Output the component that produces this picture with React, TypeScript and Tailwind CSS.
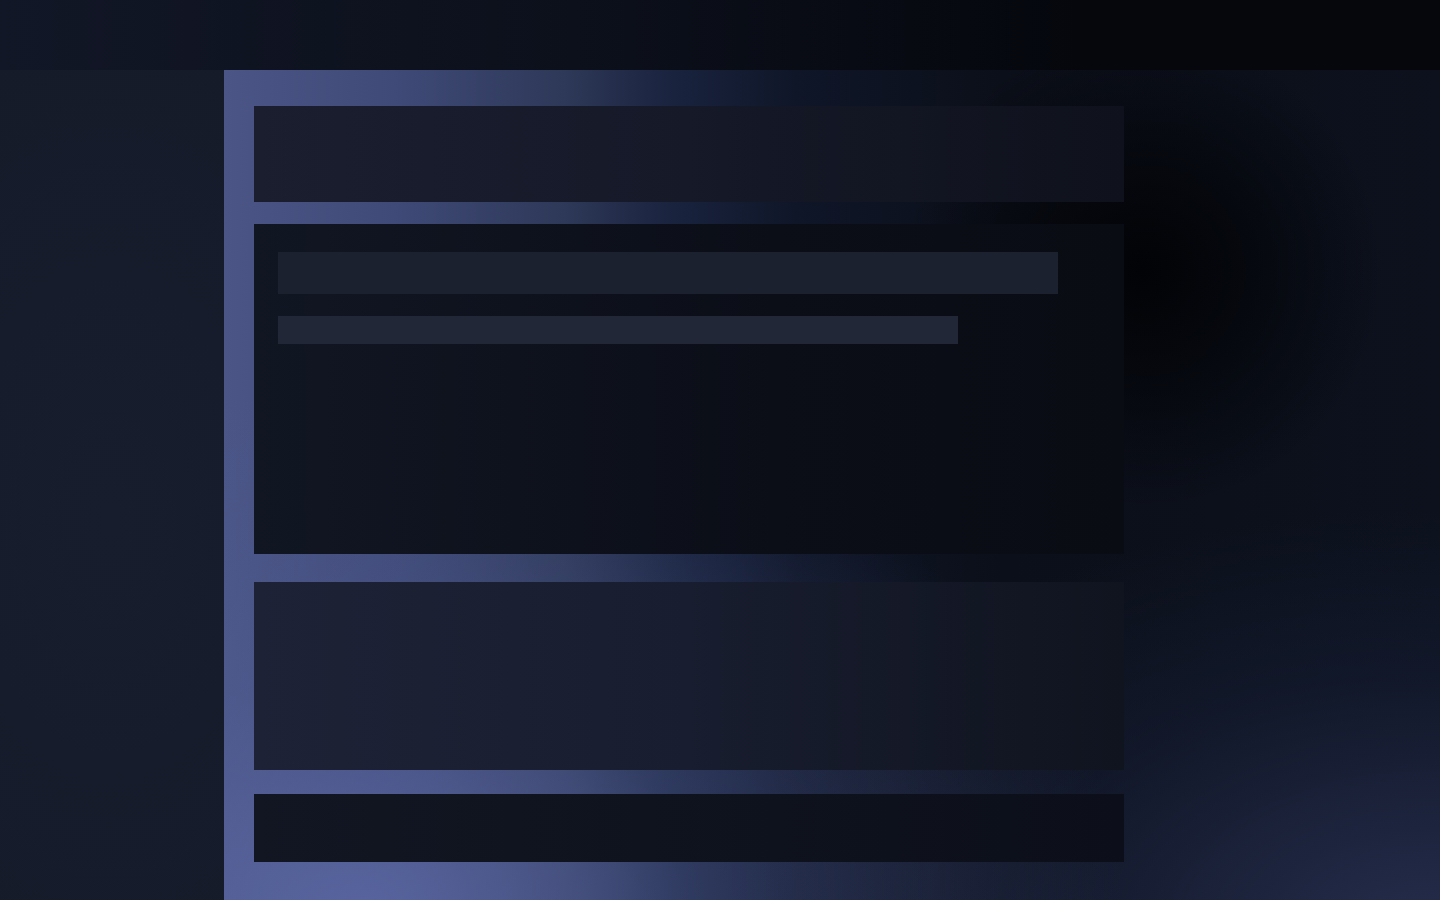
const App = () => {
  return (
    <div className="flex flex-col w-full h-[900px] overflow-hidden bg-[#161b2b]">
      {/* Header */}
      <header className="h-[70px] shrink-0 bg-[linear-gradient(90deg,#121727_0%,#0c101b_40%,#05070d_75%,#05070d_100%)]" />

      <div className="flex flex-1 min-h-0">
        {/* Sidebar */}
        <aside className="w-[224px] shrink-0 bg-[radial-gradient(ellipse_300px_500px_at_110px_450px,#181d2e,#161b2a)]" />

        {/* Main */}
        <main className="flex-1 pl-[30px] pt-[36px] pb-[38px] bg-[radial-gradient(circle_240px_at_920px_200px,#020306_0%,rgba(2,3,6,0.6)_45%,transparent_100%),radial-gradient(ellipse_760px_520px_at_140px_840px,rgba(92,104,164,0.85)_0%,rgba(80,92,146,0.4)_45%,transparent_100%),radial-gradient(ellipse_700px_420px_at_1200px_860px,rgba(38,46,78,0.95)_0%,rgba(22,30,52,0.55)_60%,transparent_100%),linear-gradient(90deg,#4b5687_0%,#3f4a78_14%,#2e3858_28%,#19233e_37%,#0f1628_47%,#0b0f19_64%,#0c111d_100%)]">
          <div className="flex flex-col w-[870px]">
            <div className="h-[96px] bg-[linear-gradient(90deg,#1a1e2f_0%,#151928_50%,#0f121c_100%)]" />

            <div className="mt-[22px] h-[330px] pt-[28px] pl-[24px] flex flex-col gap-[22px] bg-[linear-gradient(90deg,#111623_0%,#0b0e17_60%,#090c13_100%)]">
              <div className="w-[780px] h-[42px] bg-[#1c2130]" />
              <div className="w-[680px] h-[28px] bg-[#222738]" />
            </div>

            <div className="mt-[28px] h-[188px] bg-[linear-gradient(90deg,#1d2236_0%,#181d2f_50%,#10141f_100%)]" />

            <div className="mt-[24px] h-[68px] bg-[linear-gradient(90deg,#111622_0%,#0e121c_60%,#0c0f19_100%)]" />
          </div>
        </main>
      </div>
    </div>
  );
};

export default App;
